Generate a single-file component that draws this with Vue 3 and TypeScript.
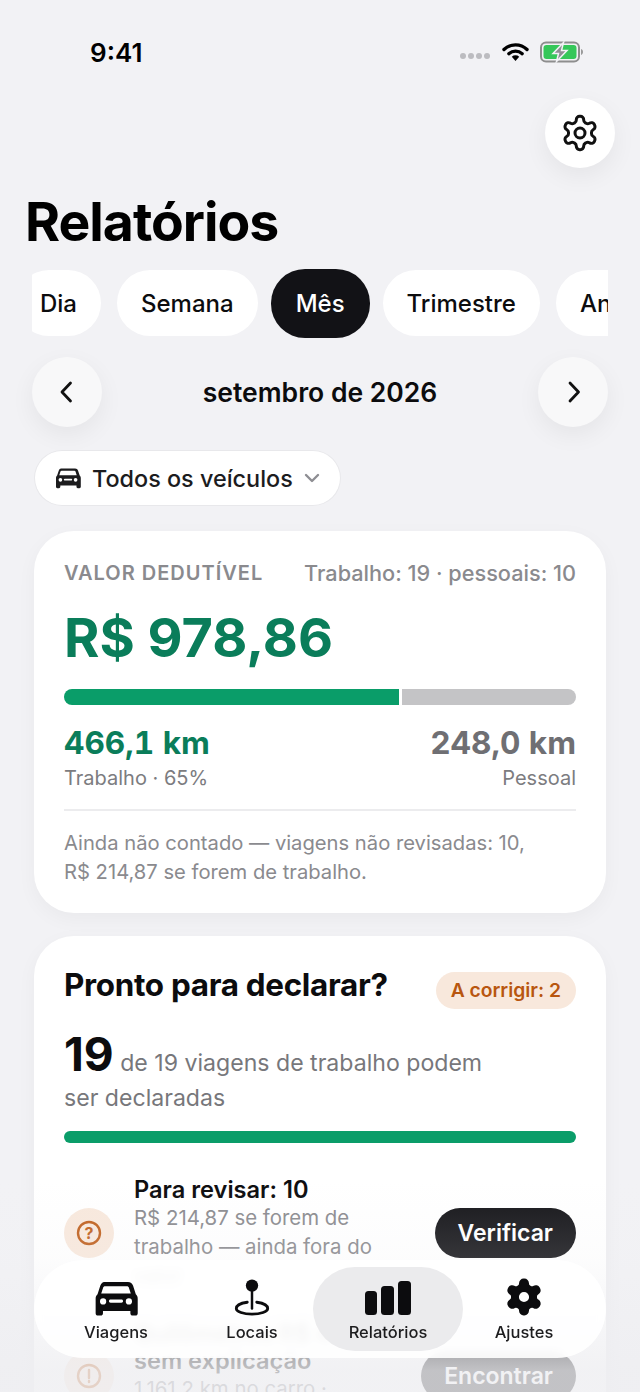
<script setup lang="ts">
  const periods = ['Dia', 'Semana', 'Mês', 'Trimestre', 'Ano'];
  const activePeriod = 'Mês';

  const tabs = [
    { label: 'Viagens', icon: 'car' },
    { label: 'Locais', icon: 'pin' },
    { label: 'Relatórios', icon: 'bars' },
    { label: 'Ajustes', icon: 'gear' },
  ];

  const gearPath =
    'M12.22 2h-.44a2 2 0 0 0-2 2v.18a2 2 0 0 1-1 1.73l-.43.25a2 2 0 0 1-2 0l-.15-.08a2 2 0 0 0-2.73.73l-.22.38a2 2 0 0 0 .73 2.73l.15.1a2 2 0 0 1 1 1.72v.51a2 2 0 0 1-1 1.74l-.15.09a2 2 0 0 0-.73 2.73l.22.38a2 2 0 0 0 2.73.73l.15-.08a2 2 0 0 1 2 0l.43.25a2 2 0 0 1 1 1.73V20a2 2 0 0 0 2 2h.44a2 2 0 0 0 2-2v-.18a2 2 0 0 1 1-1.73l.43-.25a2 2 0 0 1 2 0l.15.08a2 2 0 0 0 2.73-.73l.22-.39a2 2 0 0 0-.73-2.73l-.15-.08a2 2 0 0 1-1-1.74v-.5a2 2 0 0 1 1-1.74l.15-.09a2 2 0 0 0 .73-2.73l-.22-.38a2 2 0 0 0-2.73-.73l-.15.08a2 2 0 0 1-2 0l-.43-.25a2 2 0 0 1-1-1.73V4a2 2 0 0 0-2-2z';
  const carPath =
    'M7.2 3h17.6c1.9 0 3.2 1 3.8 2.8l2 6.2c1 .8 1.4 1.9 1.4 3.2V26c0 1-.7 1.7-1.7 1.7h-2c-1 0-1.7-.7-1.7-1.7v-1.6H6.4V26c0 1-.7 1.7-1.7 1.7h-2C1.7 27.7 1 27 1 26V15.2c0-1.3.4-2.4 1.4-3.2l2-6.2C5 4 6.300 3 7.200 3zM8 6c-.8 0-1.300.4-1.500 1.100L5.100 11.500h21.800L25.500 7.100C25.300 6.400 24.800 6 24 6H8zM6.500 15a2.300 2.300 0 1 0 0 4.600 2.300 2.300 0 0 0 0-4.600zm19 0a2.300 2.300 0 1 0 0 4.600 2.300 2.300 0 0 0 0-4.600zM12 15.800c-.7 0-1.200.5-1.200 1.200s.5 1.200 1.200 1.200h8c.7 0 1.200-.5 1.200-1.200s-.5-1.200-1.200-1.200h-8z';
</script>

<template>
  <div class="phone">
    <header class="status">
      <span class="time">9:41</span>
      <div class="status-icons">
        <div class="signal"><i /><i /><i /><i /></div>
        <svg width="27" height="20" viewBox="0 0 27 20" fill="none">
          <path d="M2 7.500a16.500 16.500 0 0 1 23 0" stroke="#000" stroke-width="3.400" stroke-linecap="round" />
          <path d="M6.800 11.800a10 10 0 0 1 13.400 0" stroke="#000" stroke-width="3.200" stroke-linecap="round" />
          <path d="M9.800 14.800a5.500 5.500 0 0 1 7.400 0l-3.700 4.200z" fill="#000" />
        </svg>
        <svg width="44" height="22" viewBox="0 0 44 22" fill="none">
          <rect x="1" y="1.500" width="38" height="19" rx="5" stroke="#8e8e8e" stroke-width="2" />
          <rect x="3.500" y="4" width="33" height="14" rx="3" fill="#35c759" />
          <path d="M41 8v6c1.400-.4 2-1.600 2-3s-.6-2.600-2-3z" fill="#9a9a9a" />
          <path d="M23.500 1.500 13 12.500h5.500L16.500 20.500 27 9.500h-5.500z" fill="#8e8e93" stroke="#f2f2f5" stroke-width="1.500" />
        </svg>
      </div>
    </header>

    <div class="top-actions">
      <button class="round-btn">
        <svg width="40" height="40" viewBox="0 0 24 24" fill="none" stroke="#111" stroke-width="1.800" stroke-linejoin="round">
          <path :d="gearPath" />
          <circle cx="12" cy="12" r="3" />
        </svg>
      </button>
    </div>

    <h1 class="title">Relatórios</h1>

    <div class="periods">
      <div class="periods-track">
        <button
          v-for="p in periods"
          :key="p"
          class="chip"
          :class="{ active: p === activePeriod }"
        >
          {{ p }}
        </button>
      </div>
    </div>

    <div class="month-nav">
      <button class="round-btn">
        <svg width="16" height="24" viewBox="0 0 16 24" fill="none" stroke="#111" stroke-width="2.800" stroke-linecap="round" stroke-linejoin="round">
          <path d="M11.500 3 3 12 11.500 21" />
        </svg>
      </button>
      <span class="month">setembro de 2026</span>
      <button class="round-btn">
        <svg width="16" height="24" viewBox="0 0 16 24" fill="none" stroke="#111" stroke-width="2.800" stroke-linecap="round" stroke-linejoin="round">
          <path d="M5 3 13.500 12 5 21" />
        </svg>
      </button>
    </div>

    <button class="vehicle">
      <svg width="26" height="24" viewBox="0 0 32 30" fill="#1c1c1e">
        <path :d="carPath" fill-rule="evenodd" />
      </svg>
      <span>Todos os veículos</span>
      <svg width="16" height="10" viewBox="0 0 16 10" fill="none" stroke="#8e8e93" stroke-width="2.400" stroke-linecap="round" stroke-linejoin="round">
        <path d="M2 2 8 8 14 2" />
      </svg>
    </button>

    <section class="card value-card">
      <div class="card-head">
        <span class="eyebrow">VALOR DEDUTÍVEL</span>
        <span class="trip-count">Trabalho: 19 · pessoais: 10</span>
      </div>
      <div class="amount">R$ 978,86</div>
      <div class="split-bar">
        <div class="split-work" />
        <div class="split-personal" />
      </div>
      <div class="km-row">
        <div>
          <div class="km green">466,1 km</div>
          <div class="km-label">Trabalho · 65%</div>
        </div>
        <div class="km-right">
          <div class="km gray">248,0 km</div>
          <div class="km-label">Pessoal</div>
        </div>
      </div>
      <p class="note">
        Ainda não contado — viagens não revisadas: 10,<br />
        R$ 214,87 se forem de trabalho.
      </p>
    </section>

    <section class="card ready-card">
      <div class="ready-head">
        <h2>Pronto para declarar?</h2>
        <span class="badge">A corrigir: 2</span>
      </div>
      <p class="ready-count"><b>19</b> de 19 viagens de trabalho podem<br />ser declaradas</p>
      <div class="ready-bar" />

      <div class="issue first">
        <div class="issue-icon">
          <svg width="26" height="26" viewBox="0 0 26 26" fill="none">
            <circle cx="13" cy="13" r="11" stroke="#bf5f1c" stroke-width="2.400" />
            <text x="13" y="18.500" text-anchor="middle" class="q-mark">?</text>
          </svg>
        </div>
        <div class="issue-text">
          <div class="issue-title">Para revisar: 10</div>
          <div class="issue-sub">R$ 214,87 se forem de trabalho — ainda fora do valor</div>
        </div>
        <button class="issue-btn">Verificar</button>
      </div>

      <div class="issue second">
        <div class="issue-icon">
          <svg width="26" height="26" viewBox="0 0 26 26" fill="none">
            <circle cx="13" cy="13" r="11" stroke="#bf5f1c" stroke-width="2.400" />
            <path d="M13 7v8M13 18v1" stroke="#bf5f1c" stroke-width="2.400" stroke-linecap="round" />
          </svg>
        </div>
        <div class="issue-text">
          <div class="issue-title">Quilômetros R$ 4<br />sem explicação</div>
          <div class="issue-sub">1.161,2 km no carro ·<br />sem registro de uso</div>
        </div>
        <button class="issue-btn">Encontrar</button>
      </div>
    </section>

    <div class="fade" />

    <nav class="tabbar">
      <div
        v-for="tab in tabs"
        :key="tab.label"
        class="tab"
        :class="{ selected: tab.label === 'Relatórios' }"
      >
        <svg v-if="tab.icon === 'car'" width="46" height="38" viewBox="0 0 32 28" fill="#0c0c0e">
          <path :d="carPath" fill-rule="evenodd" />
        </svg>
        <svg v-else-if="tab.icon === 'pin'" width="38" height="38" viewBox="0 0 38 40" fill="none">
          <circle cx="19" cy="8" r="6.500" fill="#0c0c0e" />
          <path d="M19 12v20" stroke="#0c0c0e" stroke-width="2.600" stroke-linecap="round" />
          <path d="M14 25.500C7 26.500 2.500 29 2.500 32c0 3.500 7.500 6 16.500 6s16.500-2.500 16.500-6c0-3-4.500-5.500-11.500-6.500" stroke="#0c0c0e" stroke-width="3" stroke-linecap="round" />
        </svg>
        <svg v-else-if="tab.icon === 'bars'" width="46" height="38" viewBox="0 0 46 38" fill="#0c0c0e">
          <rect x="0" y="13" width="12" height="24" rx="3.500" />
          <rect x="16" y="8" width="13" height="29" rx="3.500" />
          <rect x="33" y="3" width="13" height="34" rx="3.500" />
        </svg>
        <svg v-else width="42" height="38" viewBox="1 1 22 22" fill="#0c0c0e" stroke="#0c0c0e" stroke-width="1.300" stroke-linejoin="round">
          <path :d="gearPath + 'M12 8.400a3.600 3.600 0 1 0 0 7.200 3.600 3.600 0 0 0 0-7.200z'" fill-rule="evenodd" />
        </svg>
        <span>{{ tab.label }}</span>
      </div>
    </nav>
  </div>
</template>

<style scoped>
  .phone {
    position: relative;
    width: 640px;
    height: 1392px;
    overflow: hidden;
    background: #f2f2f5;
    color: #0c0c0e;
    font-family: Inter, 'Liberation Sans', sans-serif;
  }

  button {
    border: none;
    font-family: inherit;
    padding: 0;
  }

  .status {
    display: flex;
    align-items: center;
    justify-content: space-between;
    height: 24px;
    padding: 40px 56px 0 90px;
  }

  .time {
    font-size: 26px;
    font-weight: 600;
    color: #000;
  }

  .status-icons {
    display: flex;
    align-items: center;
    gap: 11px;
  }

  .signal {
    display: flex;
    gap: 2px;
    margin-top: 8px;
    margin-right: 1px;
  }

  .signal i {
    width: 6px;
    height: 6px;
    border-radius: 50%;
    background: #bcbcc0;
  }

  .top-actions {
    display: flex;
    justify-content: flex-end;
    padding: 34px 25px 0 0;
  }

  .round-btn {
    display: flex;
    align-items: center;
    justify-content: center;
    width: 70px;
    height: 70px;
    border-radius: 50%;
    background: #fff;
    box-shadow: 0 8px 24px rgba(0, 0, 0, 0.06);
  }

  .month-nav .round-btn {
    background: #f8f8f9;
  }

  .title {
    margin: 24px 0 0 25px;
    font-size: 53.500px;
    line-height: 60px;
    font-weight: 700;
    letter-spacing: -1px;
    color: #000;
  }

  .periods {
    margin: 16px 32px 0;
    overflow: hidden;
  }

  .periods-track {
    display: flex;
    align-items: center;
    gap: 16px;
    height: 70px;
    margin-left: -16px;
  }

  .chip {
    flex: none;
    height: 66px;
    padding: 0 24px;
    border-radius: 33px;
    background: #fff;
    color: #0c0c0e;
    font-size: 24px;
    font-weight: 500;
    white-space: nowrap;
  }

  .chip.active {
    height: 69px;
    margin: 0 -3px;
    padding: 0 25px;
    border-radius: 34px;
    background: #121216;
    color: #fff;
  }

  .month-nav {
    display: flex;
    align-items: center;
    justify-content: space-between;
    margin: 19px 32px 0;
  }

  .month {
    font-size: 26.500px;
    font-weight: 600;
  }

  .vehicle {
    display: flex;
    align-items: center;
    gap: 11px;
    height: 54px;
    margin: 24px 0 0 35px;
    padding: 0 20px;
    border-radius: 27px;
    background: #fff;
    color: #1c1c1e;
    font-size: 23.400px;
    font-weight: 500;
    box-shadow: 0 0 0 1px rgba(0, 0, 0, 0.04);
  }

  .card {
    margin: 26px 34px 0;
    padding: 0 30px;
    border-radius: 40px;
    background: #fff;
    box-shadow: 0 6px 20px rgba(0, 0, 0, 0.04);
  }

  .value-card {
    height: 382px;
    padding-top: 30px;
    box-sizing: border-box;
  }

  .card-head {
    display: flex;
    align-items: center;
    justify-content: space-between;
    font-size: 20px;
    line-height: 24px;
    color: #8a8a8e;
    font-weight: 600;
  }

  .eyebrow {
    letter-spacing: 1px;
  }

  .trip-count {
    font-size: 21.700px;
    font-weight: 500;
  }

  .amount {
    margin-top: 19px;
    font-size: 54px;
    line-height: 68px;
    font-weight: 700;
    color: #0a7d5a;
  }

  .split-bar {
    display: flex;
    gap: 3px;
    margin-top: 17px;
    height: 16px;
  }

  .split-work {
    width: 335px;
    border-radius: 8px 0 0 8px;
    background: #0a9d69;
  }

  .split-personal {
    flex: 1;
    border-radius: 0 8px 8px 0;
    background: #c4c4c6;
  }

  .km-row {
    display: flex;
    justify-content: space-between;
    margin-top: 18px;
    padding-bottom: 18px;
    border-bottom: 2px solid #ececee;
  }

  .km-right {
    text-align: right;
  }

  .km {
    font-size: 31.600px;
    line-height: 40px;
    font-weight: 700;
    font-variant-numeric: tabular-nums;
  }

  .km.green {
    color: #0a7d5a;
  }

  .km.gray {
    color: #6f6f73;
  }

  .km-label {
    margin-top: 2px;
    font-size: 20px;
    line-height: 26px;
    color: #7c7c80;
  }

  .note {
    margin: 17px 0 0;
    font-size: 20.200px;
    line-height: 29px;
    color: #8a8a8e;
  }

  .ready-card {
    margin-top: 23px;
    padding-top: 30px;
    height: 600px;
    box-sizing: border-box;
  }

  .ready-head {
    display: flex;
    align-items: center;
    justify-content: space-between;
    height: 38px;
  }

  .ready-head h2 {
    margin: 0;
    font-size: 31.400px;
    font-weight: 700;
    letter-spacing: -0.3px;
  }

  .badge {
    padding: 0 15px;
    height: 37px;
    line-height: 37px;
    border-radius: 19px;
    background: #f8e8dc;
    color: #b8560f;
    font-size: 19.300px;
    font-weight: 600;
    position: relative;
    top: 5px;
  }

  .ready-count {
    margin: 33px 0 0;
    font-size: 23.100px;
    line-height: 35px;
    color: #77777b;
  }

  .ready-count b {
    font-size: 46px;
    font-weight: 700;
    color: #0c0c0e;
  }

  .ready-bar {
    margin-top: 15px;
    height: 12px;
    border-radius: 6px;
    background: #0a9d69;
  }

  .issue {
    display: flex;
    align-items: center;
    gap: 20px;
  }

  .issue.first {
    margin-top: 33px;
  }

  .issue.second {
    margin-top: 30px;
  }

  .issue-icon {
    display: flex;
    align-items: center;
    justify-content: center;
    flex: none;
    width: 50px;
    height: 50px;
    border-radius: 50%;
    background: #f8e8dc;
  }

  .q-mark {
    font-size: 16px;
    font-weight: 700;
    fill: #bf5f1c;
  }

  .issue-text {
    flex: 1;
    min-width: 0;
  }

  .issue-title {
    font-size: 23.600px;
    line-height: 27px;
    font-weight: 600;
  }

  .issue-sub {
    font-size: 20.400px;
    line-height: 29px;
    color: #8a8a8e;
  }

  .issue-btn {
    flex: none;
    height: 50px;
    padding: 0 23px;
    border-radius: 25px;
    background: #141418;
    color: #fff;
    font-size: 23px;
    font-weight: 600;
  }

  .fade {
    position: absolute;
    left: 0;
    right: 0;
    bottom: 0;
    height: 212px;
    background: linear-gradient(rgba(238, 238, 241, 0), rgba(238, 238, 241, 0.15) 36%, rgba(238, 238, 241, 0.8) 90%);
    pointer-events: none;
  }

  .tabbar {
    position: absolute;
    left: 34px;
    right: 34px;
    bottom: 34px;
    display: grid;
    grid-template-columns: repeat(4, 136px);
    justify-content: center;
    align-items: center;
    height: 98px;
    border-radius: 49px;
    background: rgba(255, 255, 255, 0.9);
    backdrop-filter: blur(4px);
  }

  .tab {
    display: flex;
    flex-direction: column;
    align-items: center;
    justify-content: flex-end;
    height: 84px;
    padding-bottom: 9px;
    box-sizing: border-box;
    font-size: 16.500px;
    line-height: 20px;
    font-weight: 500;
    color: #1c1c1e;
  }

  .tab svg {
    margin-bottom: 6px;
  }

  .tab.selected {
    width: 150px;
    margin-left: -7px;
    border-radius: 42px;
    background: #ebebed;
  }
</style>

<style>
  html,
  body {
    margin: 0;
    background: #f2f2f5;
  }
</style>
